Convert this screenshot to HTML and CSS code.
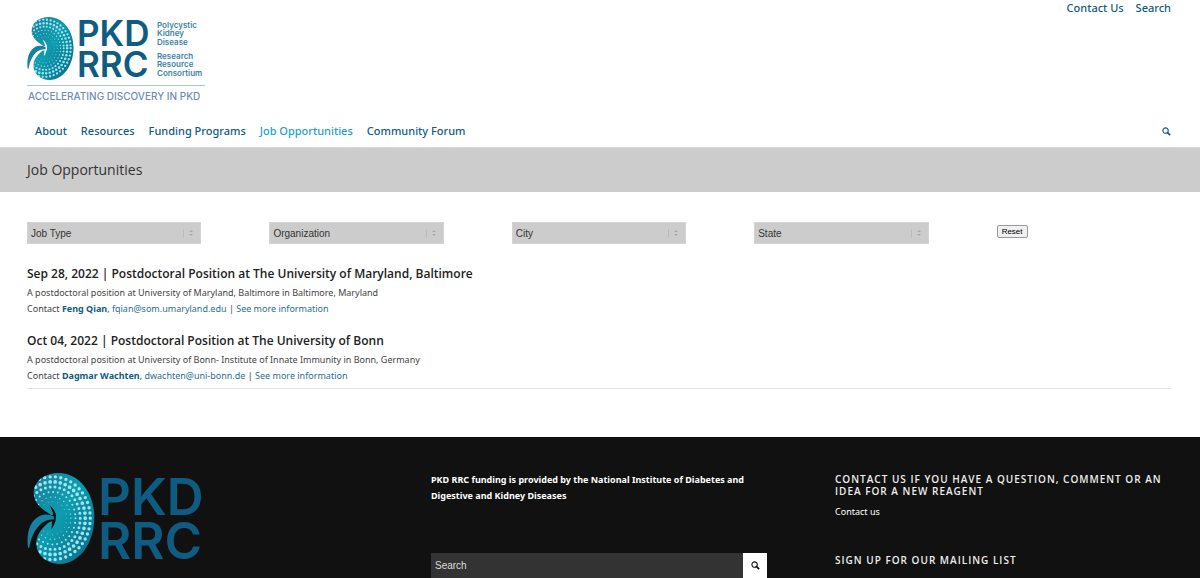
FILE: index.html
```html
<!DOCTYPE html>
<html lang="en">
<head>
    <meta charset="UTF-8">
    <meta name="viewport" content="width=device-width, initial-scale=1.0">
    <title>Job Opportunities - PKD RRC</title>
    <link rel="stylesheet" href="styles.css">
</head>
<body>
    <svg class="sprite" aria-hidden="true">
        <defs>
            <linearGradient id="kidney-fill" x1="0" y1="0" x2="1" y2="1">
                <stop offset="0" stop-color="#1a7d98"/>
                <stop offset="0.45" stop-color="#0d9db0"/>
                <stop offset="1" stop-color="#0b6585"/>
            </linearGradient>
            <clipPath id="kidney-clip">
                <path d="M78 128C50 112 20 92 20 60C20 24 52 0 95 0C155 0 200 60 200 130C200 210 155 270 98 270C56 270 28 242 28 208C28 178 48 160 78 134Z"/>
            </clipPath>
        </defs>
        <symbol id="kidney" viewBox="0 0 202 270">
            <path fill="url(#kidney-fill)" d="M78 128C50 112 20 92 20 60C20 24 52 0 95 0C155 0 200 60 200 130C200 210 155 270 98 270C56 270 28 242 28 208C28 178 48 160 78 134Z"/>
            <g class="dots" clip-path="url(#kidney-clip)">
                <ellipse cx="76" cy="134" rx="112" ry="123" pathLength="46" stroke-width="10"/>
                <ellipse cx="76" cy="134" rx="97" ry="108" pathLength="42" stroke-width="11"/>
                <ellipse cx="76" cy="134" rx="82" ry="93" pathLength="38" stroke-width="9"/>
                <ellipse cx="76" cy="134" rx="68" ry="78" pathLength="32" stroke-width="6"/>
                <ellipse cx="76" cy="134" rx="54" ry="63" pathLength="26" stroke-width="4"/>
                <ellipse cx="76" cy="134" rx="42" ry="49" pathLength="20" stroke-width="2"/>
            </g>
            <path fill="currentColor" d="M67 96C81 108 88 120 86 134C84 150 78 158 73 168C73 158 74 150 75 143C54 148 36 164 24 192L14 180C20 150 40 128 78 124C76 114 72 106 67 96Z"/>
            <path fill="#1681a0" d="M80 129C66 121 50 121 36 128C10 142 -3 176 3 222L7 222C10 196 22 166 44 148C56 140 68 137 80 138Z"/>
        </symbol>
        <symbol id="magnifier" viewBox="0 0 10 10">
            <circle cx="4" cy="4" r="3" fill="none" stroke="currentColor" stroke-width="1.2"/>
            <path d="M6 6L9 9" stroke="currentColor" stroke-width="2"/>
        </symbol>
    </svg>

    <header class="header container">
        <nav class="top-nav" aria-label="Secondary">
            <a href="#">Contact Us</a>
            <a href="#">Search</a>
        </nav>
        <a class="logo" href="#">
            <svg width="190" height="90" viewBox="0 0 190 90" role="img" aria-label="PKD RRC">
                <use href="#kidney" x="0" y="1" width="47" height="63"/>
                <g class="logo-letters">
                    <text x="50" y="30" font-size="35">PKD</text>
                    <text x="50" y="61" font-size="35">RRC</text>
                </g>
                <g class="logo-words">
                    <text x="130" y="12">Polycystic</text>
                    <text x="130" y="20">Kidney</text>
                    <text x="130" y="29">Disease</text>
                    <text x="130" y="43">Research</text>
                    <text x="130" y="51">Resource</text>
                    <text x="130" y="60">Consortium</text>
                </g>
                <path d="M0 69.5H178" stroke="#9fcbdc"/>
                <text class="logo-tagline" x="1" y="84">ACCELERATING DISCOVERY IN PKD</text>
            </svg>
        </a>
        <nav class="main-nav" aria-label="Main">
            <a href="#">About</a>
            <a href="#">Resources</a>
            <a href="#">Funding Programs</a>
            <a class="active" href="#">Job Opportunities</a>
            <a href="#">Community Forum</a>
            <a class="nav-search" href="#" aria-label="Search"><svg class="icon"><use href="#magnifier"/></svg></a>
        </nav>
    </header>

    <div class="title-bar">
        <h1 class="container">Job Opportunities</h1>
    </div>

    <main class="content container">
        <form class="filters">
            <div class="select-wrap">
                <select aria-label="Job Type"><option>Job Type</option></select>
            </div>
            <div class="select-wrap">
                <select aria-label="Organization"><option>Organization</option></select>
            </div>
            <div class="select-wrap">
                <select aria-label="City"><option>City</option></select>
            </div>
            <div class="select-wrap">
                <select aria-label="State"><option>State</option></select>
            </div>
            <button class="reset" type="reset">Reset</button>
        </form>

        <div class="jobs">
            <article class="job">
                <h2>Sep 28, 2022 | Postdoctoral Position at The University of Maryland, Baltimore</h2>
                <p>A postdoctoral position at University of Maryland, Baltimore in Baltimore, Maryland</p>
                <p>Contact <a href="#"><strong>Feng Qian</strong></a>, <a href="#">fqian@som.umaryland.edu</a> | <a href="#">See more information</a></p>
            </article>
            <article class="job">
                <h2>Oct 04, 2022 | Postdoctoral Position at The University of Bonn</h2>
                <p>A postdoctoral position at University of Bonn- Institute of Innate Immunity in Bonn, Germany</p>
                <p>Contact <a href="#"><strong>Dagmar Wachten</strong></a>, <a href="#">dwachten@uni-bonn.de</a> | <a href="#">See more information</a></p>
            </article>
        </div>
    </main>

    <footer class="footer">
        <div class="footer-columns container">
            <div class="footer-logo">
                <svg width="190" height="92" viewBox="0 0 190 92" role="img" aria-label="PKD RRC">
                    <use href="#kidney" x="0" y="1" width="68" height="91"/>
                    <g class="logo-letters">
                        <text x="71" y="43" font-size="51">PKD</text>
                        <text x="71" y="87" font-size="51">RRC</text>
                    </g>
                </svg>
            </div>
            <div class="footer-middle">
                <p class="funding">PKD RRC funding is provided by the National Institute of Diabetes and Digestive and Kidney Diseases</p>
                <form class="search">
                    <input type="text" placeholder="Search" aria-label="Search">
                    <button type="submit" aria-label="Search"><svg class="icon"><use href="#magnifier"/></svg></button>
                </form>
            </div>
            <div class="footer-contact">
                <h3>Contact us if you have a question, comment or an idea for a new reagent</h3>
                <p><a href="#">Contact us</a></p>
                <h3>Sign up for our mailing list</h3>
            </div>
        </div>
    </footer>
</body>
</html>
```
FILE: styles.css
```css
* {
    margin: 0;
    padding: 0;
    box-sizing: border-box;
}

body {
    display: flex;
    flex-direction: column;
    min-height: 100vh;
    font-family: 'Noto Sans', 'Open Sans', sans-serif;
    font-size: 9px;
    line-height: 16px;
    color: #444;
    background: #fff;
}

h1,
h2,
h3 {
    font-family: 'Open Sans', sans-serif;
}

a {
    color: #2b6f8f;
    text-decoration: none;
}

.container {
    width: 100%;
    padding: 0 29px 0 27px;
}

.sprite {
    position: absolute;
    width: 0;
    height: 0;
}

.icon {
    display: block;
    width: 9px;
    height: 9px;
}

.dots {
    fill: none;
    stroke: #a0e4f0;
    stroke-linecap: round;
    stroke-dasharray: 0 1;
}

/* header */
.top-nav,
.main-nav {
    display: flex;
    font-size: 11px;
    font-weight: 500;
}

.top-nav {
    justify-content: flex-end;
    gap: 12px;
}

.top-nav a,
.main-nav a {
    color: #0f5c82;
}

.logo {
    display: block;
    width: 190px;
    height: 90px;
    color: #fff;
}

.logo svg,
.footer-logo svg {
    display: block;
    overflow: visible;
}

.logo-letters {
    font-family: Inter, sans-serif;
    font-weight: 600;
    fill: #0f5c82;
}

.logo-words {
    font-family: Inter, sans-serif;
    font-size: 8px;
    font-weight: 600;
    fill: #3c83a3;
}

.logo-tagline {
    font-family: Inter, sans-serif;
    font-size: 10px;
    font-weight: 500;
    fill: #6f8db0;
}

.main-nav {
    align-items: center;
    gap: 14px;
    height: 32px;
    margin-top: 9px;
    padding-left: 8px;
}

.main-nav .active {
    color: #1b9fd0;
}

.main-nav .nav-search {
    margin-left: auto;
}

/* title bar */
.title-bar {
    background: #ccc;
    border-top: 1px solid #d8d8d8;
}

.title-bar h1 {
    font-size: 14px;
    font-weight: 400;
    line-height: 44px;
    color: #333;
}

/* filters */
.content {
    padding-top: 30px;
    padding-bottom: 48px;
}

.filters {
    display: grid;
    grid-template-columns: repeat(5, 1fr);
    gap: 68px;
    align-items: start;
}

.select-wrap {
    position: relative;
}

.select-wrap select {
    display: block;
    width: 100%;
    height: 22px;
    padding: 0 3px;
    border: 1px solid #d4d4d4;
    background: linear-gradient(#bbb, #bbb) right 16px center / 1px 8px no-repeat #ccc;
    font-family: Arial, 'Liberation Sans', sans-serif;
    font-size: 10px;
    color: #333;
    appearance: none;
}

.select-wrap::before,
.select-wrap::after {
    content: '';
    position: absolute;
    top: 8px;
    right: 8px;
    border: 2px solid transparent;
    border-top: 0;
    border-bottom: 2px solid #aaa;
    pointer-events: none;
}

.select-wrap::after {
    top: 12px;
    border-top: 2px solid #aaa;
    border-bottom: 0;
}

.reset {
    justify-self: start;
    width: 31px;
    height: 13px;
    margin-top: 3px;
    border: 1px solid #999;
    border-radius: 2px;
    background: #f0f0f0;
    font-family: Arial, 'Liberation Sans', sans-serif;
    font-size: 8px;
    line-height: 11px;
    color: #000;
}

/* jobs */
.jobs {
    padding: 21px 0 4px;
    border-bottom: 1px solid #e4e4e4;
}

.job + .job {
    margin-top: 15px;
}

.job h2 {
    margin-bottom: 2px;
    font-size: 12px;
    font-weight: 600;
    line-height: 18px;
    color: #222;
}

.job strong {
    font-weight: 700;
    color: #0f5c82;
}

/* footer */
.footer {
    flex: 1;
    background: #111;
    color: #fff;
}

.footer-columns {
    display: grid;
    grid-template-columns: repeat(3, 1fr);
    gap: 68px;
    padding-top: 35px;
}

.footer-logo {
    color: #111;
}

.funding {
    font-weight: 700;
}

.search {
    display: flex;
    margin-top: 49px;
}

.search input {
    flex: 1;
    min-width: 0;
    height: 25px;
    padding: 0 4px;
    border: 0;
    background: #333;
    font-family: Arial, 'Liberation Sans', sans-serif;
    font-size: 10px;
    color: #fff;
}

.search input::placeholder {
    color: #ddd;
}

.search button {
    display: flex;
    align-items: center;
    justify-content: center;
    width: 24px;
    border: 0;
    background: #fff;
    color: #111;
}

.footer-contact {
    padding-top: 1px;
}

.footer-contact h3 {
    font-size: 10px;
    font-weight: 600;
    line-height: 12px;
    letter-spacing: 1px;
    text-transform: uppercase;
    color: #eee;
}

.footer-contact p {
    margin: 7px 0 34px;
}

.footer-contact a {
    color: #fff;
}
```
